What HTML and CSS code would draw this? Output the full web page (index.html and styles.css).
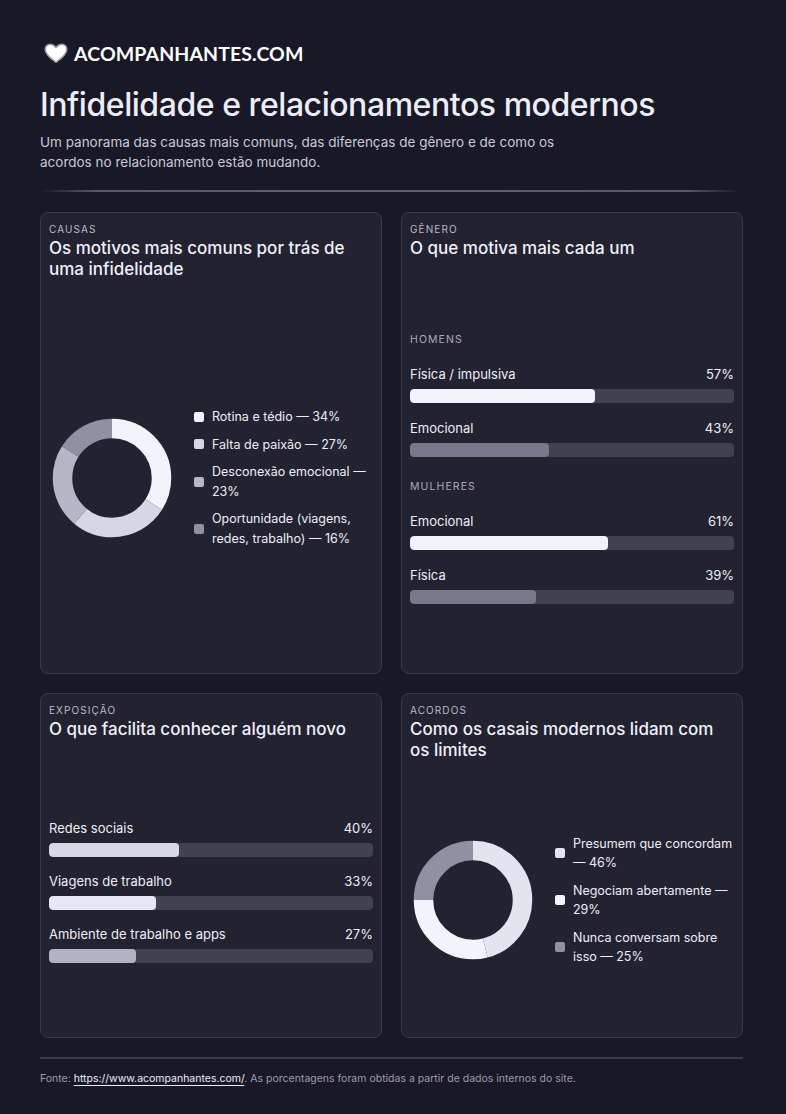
FILE: index.html
```html
<!DOCTYPE html>
<html lang="pt-BR">
<head>
<meta charset="utf-8">
<title>Infidelidade e relacionamentos modernos</title>
<link rel="stylesheet" href="styles.css">
</head>
<body>
<div class="page">
  <header class="brand">
    <svg class="heart" viewBox="0 0 24 21" width="24" height="21" aria-hidden="true">
      <path d="M12 19.3 C 5 14.2 1.2 10.6 1.2 6.4 C 1.2 3.3 3.5 1.2 6.3 1.2 C 8.4 1.2 10.2 2.4 12 4.4 C 13.8 2.4 15.6 1.2 17.7 1.2 C 20.5 1.2 22.8 3.3 22.8 6.4 C 22.8 10.6 19 14.2 12 19.3 Z" fill="#ffffff" stroke="#9a9aa6" stroke-width="1.6" stroke-linejoin="round"/>
    </svg>
    <span class="brand-name">ACOMPANHANTES.COM</span>
  </header>

  <h1 class="title">Infidelidade e relacionamentos modernos</h1>
  <p class="subtitle">Um panorama das causas mais comuns, das diferenças de gênero e de como os acordos no relacionamento estão mudando.</p>
  <div class="divider"></div>

  <main class="grid">
    <section class="card">
      <div class="card-head">
        <div class="eyebrow">CAUSAS</div>
        <h2 class="card-title">Os motivos mais comuns por trás de uma infidelidade</h2>
      </div>
      <div class="card-body donut-body">
        <svg class="donut" viewBox="0 0 120 120" width="120" height="120" aria-hidden="true">
          <g transform="rotate(-90 60 60)" fill="none" stroke-width="19.5">
            <circle cx="60" cy="60" r="49.5" pathLength="100" stroke="#f3f3fb" stroke-dasharray="34 66" stroke-dashoffset="0"/>
            <circle cx="60" cy="60" r="49.5" pathLength="100" stroke="#d6d7e4" stroke-dasharray="27 73" stroke-dashoffset="-34"/>
            <circle cx="60" cy="60" r="49.5" pathLength="100" stroke="#b5b6c6" stroke-dasharray="23 77" stroke-dashoffset="-61"/>
            <circle cx="60" cy="60" r="49.5" pathLength="100" stroke="#8f90a1" stroke-dasharray="16 84" stroke-dashoffset="-84"/>
          </g>
        </svg>
        <ul class="legend">
          <li><span class="sw sw-1"></span><span>Rotina e tédio — 34%</span></li>
          <li><span class="sw sw-2"></span><span>Falta de paixão — 27%</span></li>
          <li><span class="sw sw-3"></span><span>Desconexão emocional — 23%</span></li>
          <li><span class="sw sw-4"></span><span>Oportunidade (viagens, redes, trabalho) — 16%</span></li>
        </ul>
      </div>
    </section>

    <section class="card">
      <div class="card-head">
        <div class="eyebrow">GÊNERO</div>
        <h2 class="card-title">O que motiva mais cada um</h2>
      </div>
      <div class="card-body bars-body">
        <div class="bars bars-gender">
          <div class="group-label">HOMENS</div>
          <div class="bar-row">
            <div class="bar-meta"><span>Física / impulsiva</span><span>57%</span></div>
            <div class="track"><div class="fill fill-white" style="width:57%"></div></div>
          </div>
          <div class="bar-row">
            <div class="bar-meta"><span>Emocional</span><span>43%</span></div>
            <div class="track"><div class="fill fill-grey" style="width:43%"></div></div>
          </div>
          <div class="group-label group-2">MULHERES</div>
          <div class="bar-row">
            <div class="bar-meta"><span>Emocional</span><span>61%</span></div>
            <div class="track"><div class="fill fill-white" style="width:61%"></div></div>
          </div>
          <div class="bar-row">
            <div class="bar-meta"><span>Física</span><span>39%</span></div>
            <div class="track"><div class="fill fill-grey" style="width:39%"></div></div>
          </div>
        </div>
      </div>
    </section>

    <section class="card">
      <div class="card-head">
        <div class="eyebrow">EXPOSIÇÃO</div>
        <h2 class="card-title">O que facilita conhecer alguém novo</h2>
      </div>
      <div class="card-body bars-body">
        <div class="bars bars-exposure">
          <div class="bar-row">
            <div class="bar-meta"><span>Redes sociais</span><span>40%</span></div>
            <div class="track"><div class="fill fill-soft" style="width:40%"></div></div>
          </div>
          <div class="bar-row">
            <div class="bar-meta"><span>Viagens de trabalho</span><span>33%</span></div>
            <div class="track"><div class="fill fill-pale" style="width:33%"></div></div>
          </div>
          <div class="bar-row">
            <div class="bar-meta"><span>Ambiente de trabalho e apps</span><span>27%</span></div>
            <div class="track"><div class="fill fill-mid" style="width:27%"></div></div>
          </div>
        </div>
      </div>
    </section>

    <section class="card">
      <div class="card-head">
        <div class="eyebrow">ACORDOS</div>
        <h2 class="card-title">Como os casais modernos lidam com os limites</h2>
      </div>
      <div class="card-body donut-body">
        <svg class="donut" viewBox="0 0 120 120" width="120" height="120" aria-hidden="true">
          <g transform="rotate(-90 60 60)" fill="none" stroke-width="19.5">
            <circle cx="60" cy="60" r="49.5" pathLength="100" stroke="#e3e4f0" stroke-dasharray="46 54" stroke-dashoffset="0"/>
            <circle cx="60" cy="60" r="49.5" pathLength="100" stroke="#f3f3fb" stroke-dasharray="29 71" stroke-dashoffset="-46"/>
            <circle cx="60" cy="60" r="49.5" pathLength="100" stroke="#8f90a1" stroke-dasharray="25 75" stroke-dashoffset="-75"/>
          </g>
        </svg>
        <ul class="legend">
          <li><span class="sw sw-a"></span><span>Presumem que concordam — 46%</span></li>
          <li><span class="sw sw-1"></span><span>Negociam abertamente — 29%</span></li>
          <li><span class="sw sw-4"></span><span>Nunca conversam sobre isso — 25%</span></li>
        </ul>
      </div>
    </section>
  </main>

  <footer class="footer">
    <p>Fonte: <a href="https://www.acompanhantes.com/">https://www.acompanhantes.com/</a>. As porcentagens foram obtidas a partir de dados internos do site.</p>
  </footer>
</div>
</body>
</html>
```

FILE: styles.css
```css
* { box-sizing: border-box; }

html, body {
  margin: 0;
  padding: 0;
  background: #181826;
}

body {
  font-family: "Inter", "Liberation Sans", sans-serif;
  color: #ececf4;
}

.page {
  width: 786px;
  padding: 38px 43px 0 40px;
}

.brand {
  display: flex;
  align-items: center;
  gap: 6px;
  height: 30px;
  padding-left: 4px;
}

.heart { display: block; }

.brand-name {
  font-family: "Lato", "Open Sans", sans-serif;
  font-weight: 700;
  font-size: 19.5px;
  letter-spacing: 0.1px;
  color: #ffffff;
}

.title {
  margin: 18px 0 0 0;
  font-size: 32px;
  font-weight: 500;
  letter-spacing: -0.45px;
  line-height: 38px;
  color: #ededf6;
}

.subtitle {
  margin: 8px 0 0 0;
  width: 540px;
  font-size: 13.5px;
  line-height: 20px;
  color: #c9c9d6;
}

.divider {
  margin: 18px 3px 0 1px;
  height: 2px;
  background: linear-gradient(90deg, rgba(90,90,108,0) 0%, #5a5a6c 8%, #5e5e70 50%, #5a5a6c 92%, rgba(90,90,108,0) 100%);
}

.grid {
  margin-top: 20px;
  display: grid;
  grid-template-columns: 1fr 1fr;
  grid-template-rows: 462px 345px;
  gap: 19px 19px;
}

.card {
  background: #222230;
  border: 1px solid #3a3a48;
  border-radius: 8px;
  padding: 10px 8px 10px 8px;
  display: flex;
  flex-direction: column;
}

.eyebrow {
  font-size: 10px;
  line-height: 13px;
  letter-spacing: 1.1px;
  color: #b9bac9;
}

.card-title {
  margin: 2px 0 0 0;
  font-size: 17px;
  font-weight: 500;
  line-height: 21px;
  color: #f0f0f7;
}

.card-body {
  flex: 1;
  display: flex;
  align-items: center;
  padding-top: 12px;
}

.bars-body { padding-top: 15px; }

.donut-body {
  gap: 22px;
  padding-left: 3px;
}

.donut { display: block; flex: none; }

.legend {
  list-style: none;
  margin: 0;
  padding: 0;
  width: 178px;
  display: flex;
  flex-direction: column;
  gap: 8px;
}

.legend li {
  display: flex;
  align-items: center;
  gap: 8px;
  font-size: 12.5px;
  line-height: 19.5px;
  color: #eeeef6;
}

.sw {
  flex: none;
  width: 10px;
  height: 10px;
  border-radius: 2px;
}

.sw-1 { background: #f3f3fb; }
.sw-2 { background: #d6d7e4; }
.sw-3 { background: #b5b6c6; }
.sw-4 { background: #8f90a1; }
.sw-a { background: #e3e4f0; }

.bars {
  width: 100%;
  display: flex;
  flex-direction: column;
}

.bars-gender { gap: 17px; }
.bars-exposure { gap: 16px; }

.group-label {
  font-size: 10.5px;
  line-height: 13px;
  letter-spacing: 1.1px;
  color: #a9aab9;
  margin-bottom: 2.5px;
}

.group-2 { margin-top: 6.5px; }

.bar-row {
  display: flex;
  flex-direction: column;
  gap: 7px;
}

.bar-meta {
  display: flex;
  justify-content: space-between;
  font-size: 13px;
  line-height: 16px;
  color: #eeeef6;
}

.track {
  height: 14px;
  border-radius: 4px;
  background: #41414f;
  overflow: hidden;
}

.fill {
  height: 100%;
  border-radius: 4px;
}

.fill-white { background: #f3f3fb; }
.fill-grey { background: #777889; }
.fill-soft { background: #d7d8e6; }
.fill-pale { background: #e6e7f4; }
.fill-mid { background: #b1b2c3; }

.footer {
  margin-top: 19px;
  border-top: 2px solid #3b3b4a;
  padding-top: 13px;
}

.footer p {
  margin: 0;
  font-size: 10.5px;
  line-height: 14px;
  color: #9c9cad;
}

.footer a {
  color: #eeeef6;
  text-decoration: underline;
  text-underline-offset: 3px;
}
```
